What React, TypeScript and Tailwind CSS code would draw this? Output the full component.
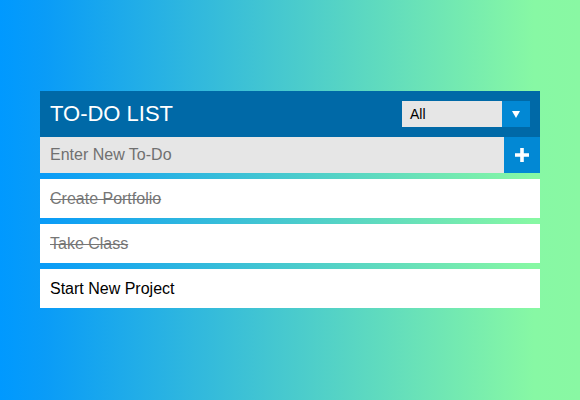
import { useState } from 'react';

interface Todo {
  id: number;
  text: string;
  done: boolean;
}

export default function App() {
  const [todos] = useState<Todo[]>([
    { id: 1, text: 'Create Portfolio', done: true },
    { id: 2, text: 'Take Class', done: true },
    { id: 3, text: 'Start New Project', done: false },
  ]);
  const [draft, setDraft] = useState('');

  return (
    <div
      className="w-[580px] h-[400px] bg-[linear-gradient(to_right,#0099ff_0%,#0a9cf7_8%,#87f8a4_92%,#89f8a3_100%)] pt-[91px] px-10"
      style={{ fontFamily: '"Liberation Sans", Arial, sans-serif' }}
    >
      <div className="w-[500px]">
        <header className="h-[46px] bg-[#0069a7] flex items-center justify-between pl-[10px] pr-[10px]">
          <h1 className="text-[22px] text-white leading-none">TO-DO LIST</h1>
          <div className="flex h-[26px]">
            <div className="w-[100px] bg-[#e6e6e6] flex items-center pl-[8px] text-[14px] text-black">All</div>
            <div className="w-[28px] bg-[#0288d4] flex items-center justify-center">
              <svg width="8" height="7" viewBox="0 0 8 7">
                <path d="M0 0 H8 L4 7 Z" fill="white" />
              </svg>
            </div>
          </div>
        </header>

        <div className="flex h-[36px] bg-[#e6e6e6]">
          <input
            value={draft}
            onChange={(e) => setDraft(e.target.value)}
            placeholder="Enter New To-Do"
            className="flex-1 bg-transparent pl-[10px] text-[16px] text-[#333] placeholder:text-[#707070] outline-none"
          />
          <button className="w-[36px] bg-[#0288d4] flex items-center justify-center">
            <svg width="14" height="14" viewBox="0 0 14 14">
              <path d="M5.2 0 H8.8 V5.2 H14 V8.8 H8.8 V14 H5.2 V8.8 H0 V5.2 H5.2 Z" fill="white" />
            </svg>
          </button>
        </div>

        <ul className="mt-[6px] flex flex-col gap-[6px]">
          {todos.map((todo) => (
            <li
              key={todo.id}
              className={`h-[39px] bg-white flex items-center pl-[10px] text-[16px] ${
                todo.done ? 'line-through text-[#767676]' : 'text-black'
              }`}
            >
              {todo.text}
            </li>
          ))}
        </ul>
      </div>
    </div>
  );
}
